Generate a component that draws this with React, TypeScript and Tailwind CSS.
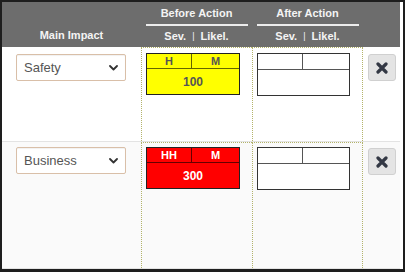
const font = { fontFamily: '"Liberation Sans", Arial, sans-serif' };

interface RiskRow {
  impact: string;
  sev: string;
  likel: string;
  score: string;
  color: 'yellow' | 'red';
  height: string;
  bg: string;
}

const rows: RiskRow[] = [
  { impact: 'Safety', sev: 'H', likel: 'M', score: '100', color: 'yellow', height: 'h-[95px]', bg: 'bg-white' },
  { impact: 'Business', sev: 'HH', likel: 'M', score: '300', color: 'red', height: 'h-[127px]', bg: 'bg-[#fafafa]' },
];

function Chevron() {
  return (
    <svg width="9" height="6" viewBox="0 0 9 6" className="shrink-0">
      <path d="M1 1 L4.5 4.5 L8 1" fill="none" stroke="#333" strokeWidth="1.8" strokeLinecap="round" strokeLinejoin="round" />
    </svg>
  );
}

function ImpactSelect({ value }: { value: string }) {
  return (
    <div className="w-[110px] h-[27px] border border-[#d9bfa8] rounded-[2px] bg-white flex items-center justify-between pl-[7px] pr-[7px] shadow-[inset_0_1px_1px_rgba(0,0,0,0.06)]">
      <span className="text-[13px] text-[#555] leading-none">{value}</span>
      <Chevron />
    </div>
  );
}

function ScoreBox({ row }: { row: RiskRow }) {
  const yellow = row.color === 'yellow';
  const bg = yellow ? 'bg-[#ffff00]' : 'bg-[#ff0000]';
  const text = yellow ? 'text-[#555]' : 'text-white';
  return (
    <div className={`w-[94px] h-[42px] border-[1.5px] border-[#222] ${bg} ${text} flex flex-col font-bold`}>
      <div className="h-[15px] flex border-b-[1.5px] border-black/60">
        <div className="w-[45px] border-r-[1.5px] border-black/60 flex items-center justify-center text-[11px] leading-none">{row.sev}</div>
        <div className="flex-1 flex items-center justify-center text-[11px] leading-none">{row.likel}</div>
      </div>
      <div className="flex-1 flex items-center justify-center text-[12px] leading-none">{row.score}</div>
    </div>
  );
}

function EmptyBox() {
  return (
    <div className="w-[93px] h-[43px] border-[1.5px] border-[#333] bg-white flex flex-col">
      <div className="h-[16px] flex border-b-[1.5px] border-[#555]">
        <div className="w-[45px] border-r-[1.5px] border-[#555]"></div>
        <div className="flex-1"></div>
      </div>
      <div className="flex-1"></div>
    </div>
  );
}

function RemoveButton() {
  return (
    <div className="w-[28px] h-[27px] bg-[#e4e4e4] border border-[#d0d0d0] rounded-[3px] flex items-center justify-center">
      <svg width="12" height="12" viewBox="0 0 12 12">
        <path d="M2 2 L10 10 M10 2 L2 10" stroke="#333844" strokeWidth="3.2" strokeLinecap="round" />
      </svg>
    </div>
  );
}

export default function App() {
  return (
    <div style={font} className="w-[405px] h-[272px] border-2 border-b-[3px] border-[#1e1e1e] bg-white overflow-hidden">
      <div className="w-[398px]">
        <div className="grid grid-cols-[139px_111px_111px_37px] h-[45px] bg-[#6d6d6d] text-[11px] font-bold text-[#f4f4f4]">
          <div className="flex items-end justify-center pb-[5px] leading-[14px]">Main Impact</div>
          {['Before Action', 'After Action'].map((title) => (
            <div key={title} className="flex flex-col items-center pt-[4px]">
              <div className="leading-[14px]">{title}</div>
              <div className="w-[102px] h-[2px] bg-[#ececec] mt-[4px]"></div>
              <div className="mt-[3px] leading-[14px] flex items-center">
                <span>Sev.</span>
                <span className="mx-[6px] text-[9px] font-normal">|</span>
                <span>Likel.</span>
              </div>
            </div>
          ))}
          <div></div>
        </div>

        {rows.map((row, i) => (
          <div key={row.impact} className={`grid grid-cols-[139px_111px_111px_37px] ${row.height} ${row.bg} border-b border-[#e3e3e3]`}>
            <div className={`pl-[14px] ${i === 0 ? 'pt-[7px]' : 'pt-[5px]'}`}>
              <ImpactSelect value={row.impact} />
            </div>
            <div className={`border-l border-t border-dotted border-[#b3b36a] pl-[4px] ${i === 0 ? 'pt-[5px]' : 'pt-[4px]'}`}>
              <ScoreBox row={row} />
            </div>
            <div className={`border-l border-r border-t border-dotted border-[#b3b36a] pl-[4px] ${i === 0 ? 'pt-[5px]' : 'pt-[4px]'}`}>
              <EmptyBox />
            </div>
            <div className={`pl-[5px] ${i === 0 ? 'pt-[7px]' : 'pt-[6px]'}`}>
              <RemoveButton />
            </div>
          </div>
        ))}
      </div>
    </div>
  );
}
